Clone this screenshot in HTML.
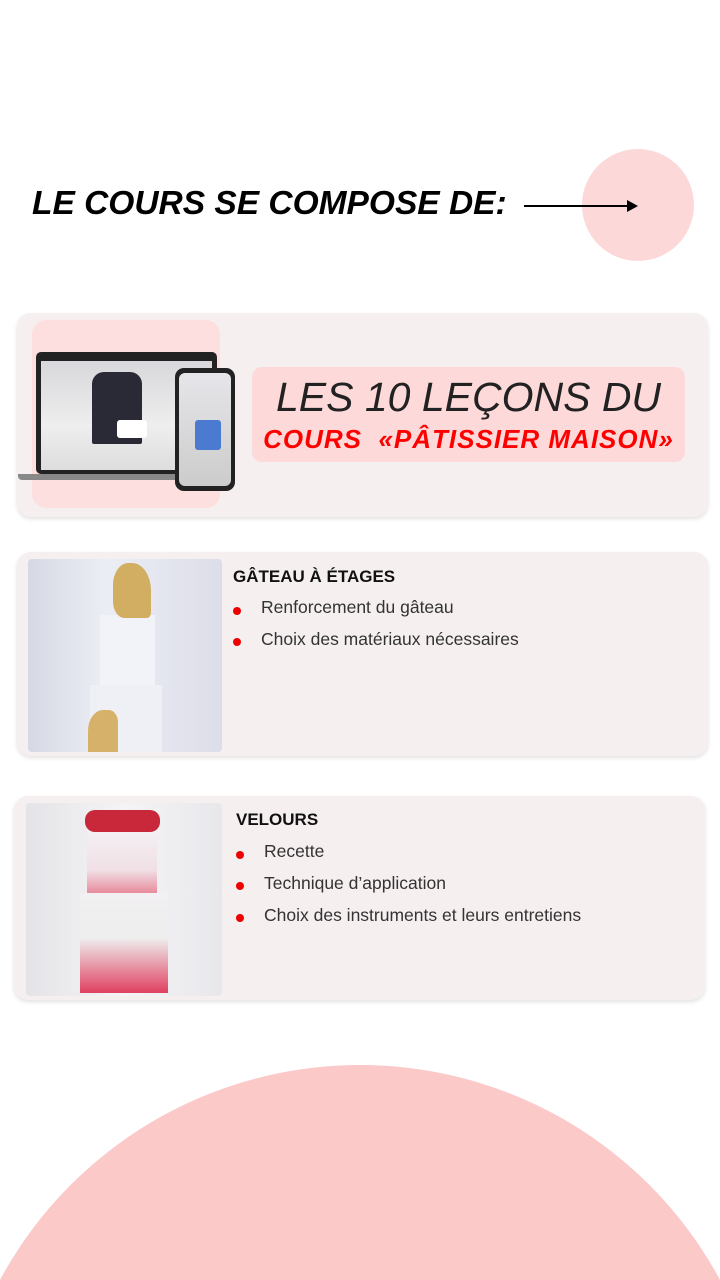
<!DOCTYPE html><html><head><meta charset="utf-8"><style>
html,body{margin:0;padding:0;width:720px;height:1280px;overflow:hidden}
body{background:#fff;position:relative;font-family:"Liberation Sans",sans-serif}
.a{position:absolute}
.card{position:absolute;background:#f5eff0;border-radius:14px;box-shadow:0 2px 4px rgba(0,0,0,.12)}
.li{position:absolute;font-size:17.5px;color:#333;}
.dot{position:absolute;width:8px;height:8px;border-radius:50%;background:#e00}
</style></head><body>
<svg class="a" style="left:0;top:1065px;display:block" width="720" height="215" viewBox="0 0 720 215"><circle cx="360" cy="409" r="409" fill="#fcc9c9"/></svg>
<div class="a" style="left:582px;top:149px;width:112px;height:112px;border-radius:50%;background:#fdd8d8"></div>
<div class="a" style="left:32px;top:185px;font-size:33.5px;font-weight:bold;font-style:italic;color:#000;white-space:nowrap">LE COURS SE COMPOSE DE:</div>
<div class="a" style="left:524px;top:205px;width:106px;height:2px;background:#000"></div>
<div class="a" style="left:627px;top:200px;width:0;height:0;border-left:11px solid #000;border-top:6px solid transparent;border-bottom:6px solid transparent"></div>

<div class="card" style="left:17px;top:313px;width:691px;height:204px"></div>
<div class="a" style="left:32px;top:320px;width:188px;height:188px;background:#fddfdf;border-radius:14px"></div>
<div class="a" style="left:36px;top:352px;width:181px;height:122px;background:#222;border-radius:5px"></div>
<div class="a" style="left:41px;top:361px;width:171px;height:109px;background:linear-gradient(#d8d8dc,#eee 60%,#ddd)"></div>
<div class="a" style="left:92px;top:372px;width:50px;height:72px;background:#2a2a36;border-radius:12px 12px 2px 2px"></div>
<div class="a" style="left:117px;top:420px;width:30px;height:18px;background:#fff;border-radius:3px"></div>
<div class="a" style="left:18px;top:474px;width:198px;height:6px;background:#888;border-radius:0 0 4px 4px"></div>
<div class="a" style="left:175px;top:368px;width:60px;height:123px;background:#222;border-radius:9px"></div>
<div class="a" style="left:179px;top:373px;width:52px;height:113px;background:linear-gradient(#e6e6ea,#ccc);border-radius:6px"></div>
<div class="a" style="left:195px;top:420px;width:26px;height:30px;background:#4a7bd0;border-radius:3px"></div>
<div class="a" style="left:252px;top:367px;width:433px;height:95px;background:#fdd9d9;border-radius:10px"></div>
<div class="a" style="left:252px;top:374px;width:433px;text-align:center;font-size:41px;font-style:italic;color:#222;white-space:nowrap">LES 10 LEÇONS DU</div>
<div class="a" style="left:252px;top:424px;width:433px;text-align:center;font-size:26px;font-style:italic;font-weight:bold;color:#f00;letter-spacing:1px;white-space:nowrap">COURS&nbsp; «PÂTISSIER MAISON»</div>

<div class="card" style="left:17px;top:552px;width:691px;height:204px"></div>
<div class="a" style="left:28px;top:559px;width:194px;height:193px;background:linear-gradient(90deg,#d6d8e4,#eceef5 40%,#dcdde8);border-radius:4px"></div>
<div class="a" style="left:100px;top:615px;width:55px;height:75px;background:#f2f3f8"></div>
<div class="a" style="left:90px;top:685px;width:72px;height:67px;background:#eef0f6"></div>
<div class="a" style="left:113px;top:563px;width:38px;height:55px;background:#d1ae62;border-radius:40% 50% 10% 30%"></div>
<div class="a" style="left:88px;top:710px;width:30px;height:42px;background:#d5b16a;border-radius:50% 30% 0 0"></div>
<div class="a" style="left:233px;top:567px;font-size:17px;font-weight:bold;color:#111">GÂTEAU À ÉTAGES</div>
<div class="dot" style="left:233px;top:607px"></div><div class="li" style="left:261px;top:597px">Renforcement du gâteau</div>
<div class="dot" style="left:233px;top:638px"></div><div class="li" style="left:261px;top:629px">Choix des matériaux nécessaires</div>

<div class="card" style="left:14px;top:796px;width:691px;height:204px"></div>
<div class="a" style="left:26px;top:803px;width:196px;height:193px;background:linear-gradient(90deg,#e4e4e8,#f4f4f6 50%,#e8e8ec);border-radius:4px"></div>
<div class="a" style="left:87px;top:825px;width:70px;height:90px;background:linear-gradient(#f4f2f4,#f0e0e6 50%,#e03a55)"></div>
<div class="a" style="left:80px;top:893px;width:88px;height:100px;background:linear-gradient(#f2f0f2,#eee 45%,#e04060)"></div>
<div class="a" style="left:85px;top:810px;width:75px;height:22px;background:#c8283a;border-radius:10px"></div>
<div class="a" style="left:236px;top:810px;font-size:17px;font-weight:bold;color:#111">VELOURS</div>
<div class="dot" style="left:236px;top:851px"></div><div class="li" style="left:264px;top:841px">Recette</div>
<div class="dot" style="left:236px;top:882px"></div><div class="li" style="left:264px;top:873px">Technique d’application</div>
<div class="dot" style="left:236px;top:914px"></div><div class="li" style="left:264px;top:905px">Choix des instruments et leurs entretiens</div>
</body></html>
